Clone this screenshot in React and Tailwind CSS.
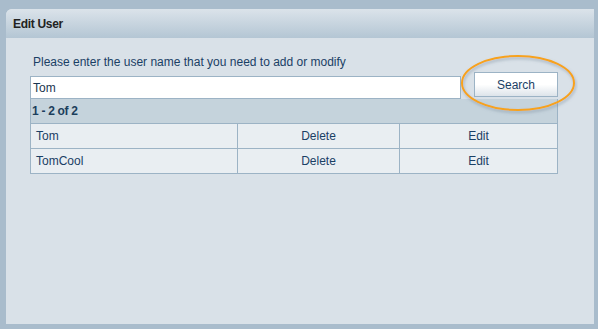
import React from "react";

const ROWS = ["Tom", "TomCool"];

export default function App() {
  return (
    <div className="w-[598px] h-[329px] bg-[#a9bccc] pt-[9px] pl-[6px] pr-[4px] pb-[5px] font-['Liberation_Sans',Arial,sans-serif]">
      <div className="h-full flex flex-col bg-[#d9e1e8] rounded-tl-[6px] overflow-hidden">
        {/* header */}
        <div className="h-[29px] flex items-center pl-[7px] bg-gradient-to-b from-[#dbe3ea] to-[#b4c6d4] text-[12px] font-bold text-[#222] tracking-[-0.3px]">
          Edit User
        </div>

        <div className="relative pl-[24px] pt-[17px]">
          <div className="pl-[3px] text-[12px] text-[#1a4065] leading-[14px]">
            Please enter the user name that you need to add or modify
          </div>

          <div className="flex items-end mt-[3px] w-[528px]">
            <div className="w-[431px] h-[23px] bg-white border border-[#9cb3c5] flex items-center pl-[2px] text-[12px] text-[#1a3550]">
              Tom
            </div>
            <div className="ml-auto w-[84px] h-[25px] mb-[2px] border border-[#9cb3c5] bg-gradient-to-b from-white via-white to-[#dde4ea] flex items-center justify-center text-[12px] text-[#1a4065]">
              Search
            </div>
          </div>

          <div className="w-[528px] border border-t-0 border-[#9cb3c5]">
            <div className="h-[24px] bg-[#c5d3dc] flex items-center pl-[1px] text-[12px] font-bold text-[#1b3e5c] tracking-[-0.3px]">
              1 - 2 of 2
            </div>
            {ROWS.map((r) => (
              <div key={r} className="h-[25px] flex border-t border-[#9cb3c5] bg-[#e9eef2] text-[12px] text-[#1a4065]">
                <div className="w-[207px] flex items-center pl-[5px] border-r border-[#9cb3c5]">{r}</div>
                <div className="w-[162px] flex items-center justify-center border-r border-[#9cb3c5]">Delete</div>
                <div className="flex-1 flex items-center justify-center">Edit</div>
              </div>
            ))}
          </div>

          {/* orange highlight ring */}
          <svg className="absolute left-[454px] top-[16px]" width="118" height="62" viewBox="0 0 118 62">
            <defs>
              <filter id="sh" x="-20%" y="-20%" width="140%" height="160%">
                <feDropShadow dx="1" dy="2" stdDeviation="1.5" floodColor="#6b7f90" floodOpacity="0.5" />
              </filter>
            </defs>
            <ellipse cx="58" cy="29" rx="56" ry="27" fill="none" stroke="#f7a21c" strokeWidth="2" filter="url(#sh)" />
          </svg>
        </div>
      </div>
    </div>
  );
}
